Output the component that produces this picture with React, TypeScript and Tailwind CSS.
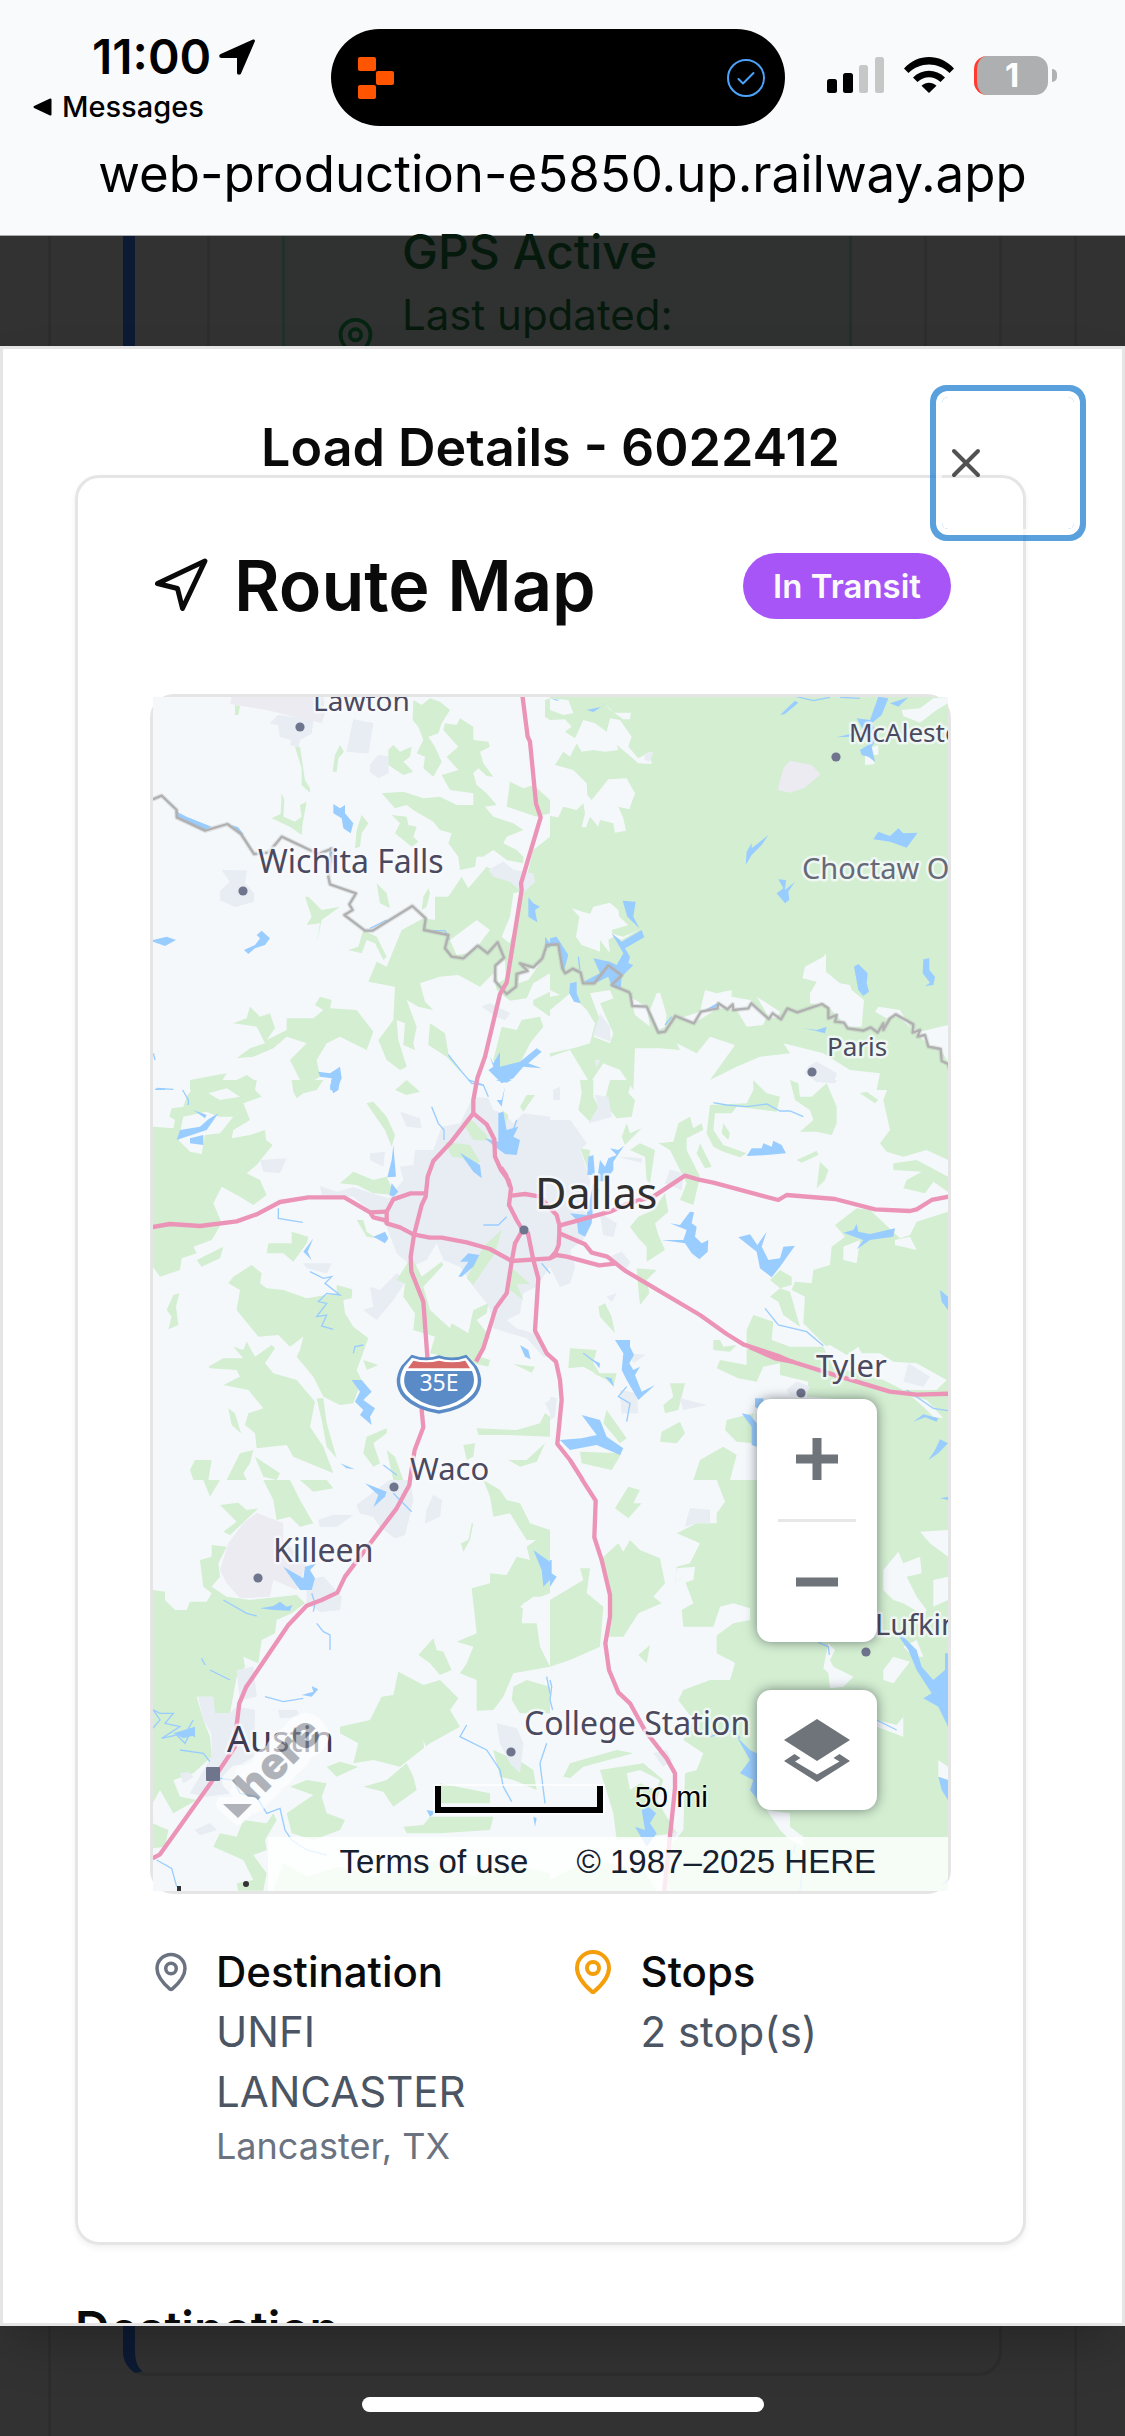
import React from "react";
import { MapPin, Navigation, X } from "lucide-react";

type Tile = {
  at: [number, number];
  green: string[];
  light?: string[];
  urban: string[];
  grey?: string[];
  water: string[];
  streams: string[];
};

const tiles: Tile[] = [
  {
    at: [140, 690],
    green: [
      "820,30 845,45 870,25 900,35 930,60 905,100 895,130 865,140 885,170 905,215 880,260 850,235 855,200 830,190 850,150 835,110 818,90",
      "915,100 950,105 960,85 1000,110 1000,150 1045,155 1050,170 1020,185 1030,220 1060,260 1040,258 1015,235 1000,250 1010,285 1040,310 1070,345 1035,350 1060,380 1090,390 1120,400 1150,420 1100,440 1090,460 1130,480 1150,500 1150,520 1100,510 1060,480 1030,500 1010,500 1005,530 960,540 955,500 925,460 935,430 900,420 880,395 820,360 800,345 765,355 725,310 790,305 850,325 900,320 950,345 1000,345 1000,310 930,300 905,255 955,240 920,200 955,170 910,120",
      "745,180 760,165 780,185 815,170 810,200 790,215 820,245 790,255 745,225",
      "465,170 480,170 495,270 510,295 510,308 485,285 485,235",
      "600,165 612,185 595,205 590,245 578,245 585,195",
      "425,310 433,330 430,380 465,395 485,380 480,345 500,335 488,400 485,435 450,410 395,385 422,372",
      "665,375 685,400 665,430 660,470 645,475 650,420",
      "755,375 800,380 805,405 830,410 820,440 835,455 815,470 765,430 780,400",
      "1110,275 1150,295 1180,285 1230,330 1230,370 1190,380 1100,350",
      "885,620 925,620 965,560 985,595 1040,530 1100,560 1150,600 1180,480 1230,440 1230,850 1180,880 1160,925 1110,932 1070,900 1060,850 1020,890 955,855 900,860 840,880 855,935 880,960 835,950 800,930 830,1010 820,1060 825,1080 790,1065 795,1000 770,990 775,1050 800,1130 780,1140 740,1110 715,1050 760,990 765,890 685,875 710,815 740,830 785,720 850,685 885,690",
      "280,1000 320,985 330,950 360,980 390,970 405,1015 380,1050 440,1020 440,985 520,985 550,960 525,945 540,920 575,930 570,955 650,960 700,1025 680,1080 600,1040 560,1060 530,1110 540,1160 490,1190 465,1140 450,1110 500,1060 440,1040 400,1075 340,1100 290,1105 330,1075 375,1060 350,1010",
      "150,1170 230,1155 260,1150 230,1200 150,1200",
      "290,1170 320,1155 350,1175 330,1200 300,1200",
      "870,1000 915,1030 925,1090 965,1150 920,1100 865,1065",
      "1085,1010 1130,1020 1145,990 1200,980 1210,1010 1170,1060 1140,1120 1080,1150 1060,1110",
      "505,620 545,660 600,650 545,690 530,760 540,700 500,705 515,680 495,620",
      "670,720 710,740 740,800 730,810 705,760 680,750 665,790 625,780 655,770",
      "710,580 740,610 750,655 720,640",
      "1180,930 1230,905 1230,980 1180,945",
      "865,595 870,610 860,650 845,660 850,620",
      "285,45 300,48 295,75 285,75",
      "1215,30 1230,25 1230,90 1215,80",
    ],
    light: [
      "930,750 1010,690 1050,720 1020,760 985,790 950,795",
      "1120,610 1140,605 1130,700 1108,760 1085,740 1110,680",
      "1065,830 1095,810 1098,865 1075,880",
      "1140,850 1200,820 1165,870 1135,880",
    ],
    urban: [
      "245,540 320,542 315,580 342,610 342,635 285,650 240,630 240,605 270,575",
      "390,100 415,75 520,90 515,130 480,150 475,172 450,165 455,150 420,140 415,105",
      "640,88 700,100 685,190 620,185",
      "690,225 715,195 745,200 745,250 715,265 690,245",
      "1045,540 1090,515 1120,540 1180,550 1185,575 1150,610 1110,575 1060,560",
      "1025,950 1050,940 1110,970 1095,990 1070,980",
    ],
    grey: ["275,20 550,20 555,70 545,100 440,75 380,60 270,42"],
    water: [
      "105,362 140,380 215,410 190,420 110,385",
      "580,342 600,355 615,345 615,370 640,400 632,430 610,415 605,385 580,370",
      "38,750 80,740 108,750 75,768 38,755",
      "350,735 365,722 390,745 375,765 345,775 325,792 312,780 345,765 360,745",
      "1165,622 1180,640 1200,650 1185,660 1192,697 1165,680",
      "535,1145 570,1150 600,1130 605,1165 590,1200 570,1200 575,1165 540,1160",
      "1050,1100 1060,1120 1080,1085 1080,1130 1140,1115 1190,1075 1205,1085 1165,1120 1205,1135 1150,1130 1120,1165 1085,1180 1045,1140 1060,1130",
      "275,405 295,412 312,435 300,430",
      "570,470 585,480 580,520 565,510",
      "1215,740 1230,760 1230,775 1215,770",
    ],
    streams: ["925,1095 965,1145 995,1180 1030,1185", "690,715 740,690", "880,722 915,722 928,750", "40,1090 45,1110", "50,1195 100,1198"],
  },
  {
    at: [550, 690],
    green: [
      "0,20 1194,20 1194,1200 980,1200 990,1150 900,1140 820,1090 700,1060 720,1090 630,1100 560,1130 480,1170 530,1100 555,1065 480,1040 440,1090 380,1060 390,1080 330,1075 255,1075 250,1200 210,1140 160,1120 120,1180 60,1080 0,1100",
    ],
    light: [
      "0,25 55,30 70,70 40,75 0,60",
      "165,40 190,68 243,68 240,88 220,88 180,60",
      "0,90 45,88 65,110 45,125 75,145 100,90 135,100 170,125 180,85 210,90 245,140 235,170 265,205 300,185 305,222 265,220 225,185 200,165 205,180 165,185 130,180 95,185 80,160 60,200 40,185 15,225 70,240 110,280 112,315 125,330 175,268 230,265 255,310 238,358 205,350 220,385 228,422 195,428 190,400 150,390 145,410 120,380 108,412 95,412 105,370 100,340 80,360 40,350 25,382 0,378",
      "65,655 120,672 130,650 180,638 205,660 208,680 235,705 185,720 190,740 175,750 180,790 150,750 150,785 95,765 78,740 88,680",
      "1055,60 1110,55 1150,25 1194,20 1194,40 1160,60 1110,98 1060,78",
      "820,800 828,790 828,845 870,880 900,885 905,900 942,930 935,1010 890,1010 835,950 780,940 780,910 800,875 757,865 765,830",
      "320,910 330,908 350,975 345,1010 325,1020 300,960",
      "450,965 465,900 500,910 545,900 545,920 600,930 650,980 640,1005 590,1010 560,960 505,955 430,1000 390,985",
      "620,920 690,965 680,985 655,980",
      "985,950 1050,960 1080,1010 1110,1025 1194,1005 1194,1115 1170,1075 1135,1065 1100,1030 1040,975 1010,985 975,965",
      "120,910 180,900 190,925 150,940 190,1030 180,1060 130,1040 150,990",
      "0,960 30,935 60,910 110,960 135,1000 120,1060 70,1075 0,1090",
      "180,730 220,740 265,720 215,750",
      "945,180 985,165 985,195 960,195 975,222 945,225",
      "240,920 290,950 300,1010 255,975",
      "0,900 30,915 0,920",
    ],
    urban: [
      "775,1130 800,1115 860,1150 850,1180 800,1175 765,1150",
      "150,970 180,1010 182,1055 130,1035",
      "285,190 310,185 300,215 283,210",
      "135,1110 150,1110 140,1135",
    ],
    grey: ["720,212 785,225 812,253 765,293 720,308 683,300 700,235"],
    water: [
      "110,60 155,50 185,30 130,66",
      "690,75 735,32 745,38 705,72",
      "985,20 1015,25 995,75 965,100 985,140 965,170 975,215 955,200 935,195 930,180 955,165 945,130 920,85 960,90",
      "860,142 910,130 950,125 900,140",
      "1020,40 1075,22 1045,50",
      "0,25 30,30 20,32",
      "587,525 590,485 605,460 605,475 655,435 635,465 605,495",
      "970,448 985,425 1020,438 1045,415 1060,430 1103,428 1070,473 1020,455",
      "685,568 708,570 705,600 735,575 715,605 718,630 705,640 680,610 700,595",
      "218,632 257,635 250,680 268,715 232,680",
      "185,730 215,755 275,720 283,742 225,775 240,800 235,820 250,825 215,860 212,900 185,890 175,860 135,880 100,875 150,850 130,805 180,815 200,825 220,790",
      "0,745 20,740 55,795 40,850 25,765 0,765",
      "60,880 80,875 80,910 92,940 72,935 58,910",
      "912,830 925,822 953,850 950,880 957,905 940,918 925,900",
      "1120,808 1138,805 1138,840 1155,860 1150,885 1125,888 1140,878 1118,850",
      "760,1015 800,1020 830,1010 825,1030 795,1022",
      "465,960 500,940 505,950",
    ],
    streams: ["85,800 90,840", "300,970 325,1025", "345,1005 365,980", "740,20 790,32 840,22", "870,22 930,25"],
  },
  {
    at: [140, 1080],
    green: [
      "38,140 100,145 105,120 88,110 95,85 130,80 140,50 175,0 350,0 345,30 365,50 310,70 330,120 280,150 275,175 330,165 375,150 378,180 398,195 350,255 320,280 360,300 380,345 340,375 300,350 245,320 220,370 245,430 215,480 160,500 170,520 125,535 120,570 60,590 38,560",
      "280,590 335,555 365,580 360,610 380,625 430,630 500,655 590,640 590,615 637,628 635,655 610,660 615,700 640,740 685,775 650,870 665,900 640,970 600,975 550,950 520,890 470,830 480,810 490,770 450,800 415,765 355,770 290,690 300,630 265,610",
      "205,860 250,835 310,835 280,800 310,810 320,785 345,830 395,795 405,805 375,850 400,880 470,900 525,965 510,1040 550,1100 580,1180 460,1130 440,1095 350,1105 345,1060 315,1035 325,1000 370,985 325,930 250,915 300,890 290,870 210,865",
      "455,455 505,470 500,490 460,545 430,520 380,520 385,490 455,490",
      "170,540 250,500 240,535 185,560",
      "100,645 118,640 108,680 115,735 85,748 95,710 80,690",
      "530,955 550,955 560,1030 590,1135 560,1100 545,1020",
      "265,985 285,1000 303,1060 275,1035",
      "600,310 640,275 700,300 740,290 765,345 700,340 650,315",
      "680,70 700,65 740,110 765,165 755,200 735,150 700,100",
      "455,0 550,0 530,30 490,40 470,55 460,35",
      "765,30 800,0 840,35 800,45",
      "680,1070 740,1045 740,1060 700,1090 720,1150 700,1160 670,1120",
      "1010,1045 1130,1050 1200,1030 1215,1000 1230,1010 1230,1070 1100,1065 1015,1065",
      "1105,1140 1160,1140 1215,1090 1190,1145 1140,1160",
      "970,1095 1005,1090 1000,1130 980,1140",
      "150,1170 165,1140 215,1140 205,1200 160,1200",
      "300,1120 340,1110 330,1150 310,1180 320,1200 260,1200",
      "345,1130 420,1180 410,1200 370,1190",
      "740,1110 765,1130 790,1200 760,1200",
      "650,420 670,420 680,455 710,475 680,470",
      "670,840 715,855 680,870",
      "1120,852 1185,860 1175,878",
    ],
    light: ["130,110 200,95 235,110 280,110 240,160 195,165 185,222 150,215 115,180", "205,40 260,25 300,50 240,60"],
    urban: [
      "1000,50 1045,55 1060,90 1090,100 1120,130 1150,100 1230,110 1230,560 1190,620 1150,640 1140,700 1100,720 1130,745 1180,760 1230,830 1210,830 1160,775 1060,745 1050,690 1040,670 1000,620 960,560 910,540 890,490 860,540 815,560 770,520 740,440 700,400 640,350 545,345 540,318 590,335 640,322 745,355 790,300 780,260 820,255 825,210 880,210 905,140 960,130",
      "670,690 700,680 690,620 720,630 770,580 800,600 760,660 710,720",
      "780,95 840,115 845,145 800,140",
      "690,220 735,215 730,260 690,240",
      "360,240 440,235 420,280 370,275",
      "490,550 575,550 560,580 500,565",
      "1215,970 1230,960 1230,1000",
    ],
    water: [
      "235,100 200,150 110,180 120,150 180,140 205,118",
      "160,90 200,105 195,115",
      "150,175 190,165 190,195 150,190",
      "760,195 768,290 742,292 755,240",
      "960,218 1020,255 1025,295 1000,275",
      "1075,100 1090,95 1100,150 1135,140 1120,170 1140,180 1130,225 1095,222 1065,200 1035,175 1075,185",
      "1095,20 1085,80 1070,60 1085,60",
      "575,0 600,0 595,30 580,40 570,20",
      "635,900 665,900 695,935 670,960 705,985 690,1010 695,1035 660,1005 670,990 645,965 660,935",
      "955,590 985,545 960,545 985,520 1018,525 1000,560 965,590",
      "700,470 735,455 745,475 735,490",
      "490,515 520,475 503,515 515,540",
      "1140,795 1165,810 1172,838 1155,830",
      "1065,0 1115,0 1100,8",
      "755,310 775,335 760,350 748,345",
      "600,1150 645,1168 620,1165",
    ],
    streams: [
      "510,575 550,595 575,590 555,610 600,645 560,640 535,665 560,670 530,710 560,705 545,738 580,748",
      "875,80 895,130 912,150 912,180",
      "415,385 415,415 488,427",
      "1030,435 1075,435 1100,410",
      "128,30 145,60 145,75",
      "640,820 645,800 670,795",
      "985,0 1030,15 1045,50",
      "1205,550 1230,580",
      "730,1155 770,1185",
      "1130,120 1120,150",
      "45,28 75,28",
    ],
  },
  {
    at: [550, 1080],
    green: [
      "90,0 130,0 130,50 145,80 135,120 120,125 85,90 95,40",
      "180,0 245,0 235,40 255,60 245,110 200,115 180,90 165,60",
      "610,0 650,40 690,50 680,95 560,80 545,100 495,100 490,150 520,195 590,220 570,232 520,215 490,200 470,160 480,75 590,70 610,30",
      "520,130 540,160 535,180 515,160",
      "720,0 745,10 750,50 785,50 830,10 860,80 860,130 845,165 800,155 750,155 790,120 780,90 735,60",
      "930,40 950,35 985,60 975,70",
      "990,0 1194,0 1194,240 1130,210 1060,230 1010,215 990,190 1020,150 1000,60 1015,20",
      "1030,250 1100,240 1194,290 1194,335 1150,305 1125,340 1060,325 1070,300 1115,275 1030,270",
      "325,190 370,185 385,130 420,110 430,145 455,130 460,150 410,175 410,210 450,290 430,375 390,360 410,310 380,250 360,210",
      "450,190 485,260 465,265 440,220",
      "810,245 835,270 825,300 800,325",
      "740,240 800,212 805,225 755,248",
      "90,205 120,210 115,270",
      "275,145 225,195 215,170 230,130 240,160",
      "270,190 315,210 300,310 290,300 285,230 240,210",
      "240,440 265,410 310,390 345,340 355,395 315,430 325,465 345,510 290,545 290,500 265,475",
      "260,565 320,570 290,600 298,640 270,675 265,625",
      "660,600 690,570 725,590 725,615 690,625",
      "660,650 690,625 720,635 750,740 700,705 685,665",
      "790,570 840,555 845,500 885,470 855,435 920,385 960,390 1050,475 1080,465 1100,425 1194,395 1194,1200 900,1200 900,960 770,950 775,905 690,885 690,850 640,860 620,905 565,895 500,865 510,840 590,855 590,750 610,705 670,725 665,780 720,800 830,800 760,730 765,650 725,630 735,605 785,610",
      "145,680 165,670 185,710 195,760 150,710",
      "60,805 140,810 130,850 155,890 100,860 55,865",
      "360,910 405,910 385,990 345,1000 340,975 370,950",
      "335,1055 390,1025 405,1060 380,1090 330,1085",
      "430,1200 450,1140 520,1100 560,1125 540,1200",
      "530,1020 610,1000 610,1090 560,1085 525,1050",
      "90,1115 215,1120 185,1170 95,1150",
      "170,990 230,1075 210,1090 160,1030",
      "490,780 510,780 520,800 560,795 540,815 490,810",
      "130,880 200,880 190,920 170,900",
    ],
    light: [
      "820,800 840,795 890,825 925,800 935,820 990,820 1030,845 1100,850 1190,900 1160,930 1060,930 1000,900 850,860",
      "1035,480 1080,470 1100,510 1035,495",
      "880,500 930,480 920,550 880,540",
      "1000,420 1060,440 1040,460",
      "1085,950 1130,960 1180,1015 1150,1010 1120,980",
    ],
    urban: [
      "0,120 60,120 110,190 90,210 120,300 100,480 60,510 75,560 60,610 30,620 0,560",
      "10,30 30,20 30,60 10,60",
      "135,45 175,50 185,110 115,130 145,80",
      "150,400 200,430 190,470 160,465",
      "180,530 215,515 240,545 225,575",
      "360,270 400,280 395,330 345,310",
      "710,930 740,905 780,920 765,950 720,945",
      "1075,850 1140,890 1120,920 1060,905",
      "210,930 260,940 265,1000 215,1000",
      "390,955 470,975 400,990",
      "170,650 200,640 185,665",
      "800,0 860,0 855,10",
      "205,230 275,235 275,248",
      "240,820 285,825 250,850",
      "0,950 20,955 15,1010 0,1020",
    ],
    water: [
      "590,228 605,205 635,205 640,190 665,200 670,182 695,195 708,220 650,225",
      "195,780 240,780 240,800 252,825 238,850 250,870 270,860 255,885 275,935 315,915 265,960 230,900 215,870 220,820",
      "115,230 130,225 135,285 112,285",
      "150,240 165,260 175,235 200,225 180,205 205,210 222,197 190,245 190,270 165,305 190,300 140,305",
      "130,310 150,330 130,370 125,430 105,470 85,460 80,420 60,400 110,405",
      "360,430 390,435 420,395 432,397 425,430 440,440 435,470 455,490 475,480 473,515 448,538 425,520 405,490 335,480 400,480 410,450",
      "565,472 600,463 622,495 650,455 635,500 655,540 690,535 700,500 735,497 690,560 665,592 630,565 620,515",
      "880,458 910,450 920,432 925,455 960,462 1035,445 1030,470 960,480 920,508 940,480",
      "1170,630 1194,650 1194,690 1175,665",
      "30,1080 95,1075 140,1065 95,1005 150,1020 170,1070 220,1105 210,1125 140,1095 60,1110",
      "1090,1025 1120,1003 1165,1015 1160,1025 1125,1012",
      "1135,1140 1155,1110 1170,1078 1194,1090 1165,1120",
      "575,1000 600,1005 620,1030 620,1100 605,1095 605,1040",
      "615,955 640,955 640,1000 615,980",
      "165,890 185,895 192,920",
      "130,840 150,850 148,865",
    ],
    streams: [
      "490,68 530,75 590,80 650,72 690,93 720,93 760,110",
      "645,685 685,735 770,755 820,797",
      "1070,930 1150,985 1194,992",
      "230,920 205,950 240,970 230,1025",
      "100,820 140,850",
    ],
  },
  {
    at: [140, 1480],
    green: [
      "370,0 450,0 480,60 520,130 480,140 450,110 410,120 400,60",
      "480,0 560,0 580,25 520,35",
      "240,75 295,68 320,90 355,85 270,165 250,155 290,125",
      "180,240 215,230 215,195 260,200 235,250 240,290 215,320 260,350 330,360 470,345 495,370 455,400 410,420 405,460 365,480 355,550 310,530 315,560 290,590 270,700 225,700 215,650 170,650 190,720 210,770 215,830 160,880 100,900 120,950 170,960 100,1000 60,930 38,970 38,330 75,335 75,360 105,390 140,390 150,365 200,365 215,340 190,320",
      "775,575 850,615 900,600 955,655 930,690 960,740 870,790 780,860 700,840 640,850 655,790 600,760 600,740 690,720 725,650 760,645",
      "995,325 1050,310 1050,280 1100,285 1130,230 1170,240 1160,200 1230,150 1230,340 1150,370 1145,430 1190,430 1200,500 1230,560 1120,580 1090,650 1060,690 1010,692 1010,600 960,580 980,550 1000,500 950,485 1010,460",
      "1030,0 1080,30 1100,60 1140,70 1170,130 1230,150 1230,180 1160,180 1110,100 1060,110 1050,50",
      "835,525 880,475 890,510 910,515 935,570 900,585 870,550",
      "995,130 1000,130 990,180 970,215 963,190 985,180",
      "1120,620 1160,600 1230,620 1230,700 1140,700 1115,660",
      "1060,810 1150,850 1180,870 1190,930 1120,900 1080,890",
      "440,1000 520,945 450,920 500,900 560,910 545,950 560,1000 615,1020 600,1050 520,1080 455,1060",
      "560,860 600,845 655,860 590,890",
      "240,1060 290,1070 310,1020 380,1030 400,1000 410,1020 375,1080 380,1110 340,1125 380,1180 370,1232 295,1232 290,1210 340,1200 310,1140 220,1100",
      "670,920 740,900 800,850 820,890 830,930 760,980 730,935",
      "900,910 1050,940 1050,970 900,970",
      "870,1010 1060,1010 1050,1050 900,1060 800,1060 790,1040 850,1035",
      "400,1232 430,1150 500,1190 600,1160 700,1190 900,1140 1000,1190 1100,1150 1230,1180 1230,1232",
      "38,1030 85,1050 75,1100 38,1105",
      "190,0 240,0 210,50",
    ],
    light: ["1140,380 1180,350 1230,350 1230,400 1190,410", "850,780 870,830 855,830"],
    urban: [
      "650,75 750,0 810,0 820,60 795,165 765,175 720,140 700,110 660,100",
      "535,120 580,105 640,105 590,140 540,140",
      "860,90 880,45 905,60 900,110 855,130",
      "500,300 550,290 605,350 600,390 540,395 500,370",
      "175,650 220,650 225,700 270,700 290,680 345,690 340,830 290,860 270,940 200,950 150,940 215,830 215,760 190,720",
      "120,880 145,875 160,890 130,910",
      "165,1050 210,1030 230,1050 180,1065",
      "1070,730 1130,745 1150,790 1140,880 1110,850 1080,790",
      "290,570 340,560 350,650 300,660",
      "415,690 470,690 480,710 420,715",
    ],
    grey: ["350,98 430,130 430,180 500,250 470,330 400,300 390,350 300,355 260,310 240,270 265,190 310,130"],
    water: [
      "675,10 740,35 735,50 700,82 715,45",
      "430,260 490,295 495,260 530,250 510,270 525,295 515,330 480,330",
      "360,385 400,378 420,365 440,380 457,375 450,392 400,390",
      "485,645 520,635 515,618 535,628 515,650",
      "1180,210 1230,245 1230,300 1210,320 1205,270",
      "100,760 165,740 165,765 130,775",
      "1180,1010 1190,1015 1185,1040",
      "860,990 890,995 870,1010",
    ],
    streams: [
      "38,745 60,720 40,690 60,700 100,700 75,730 120,740 65,775 110,765 135,790 150,760 165,770 145,745 160,720",
      "120,810 190,820 210,845",
      "240,895 280,900 300,940 350,950 380,1000 420,985 435,1050 455,1080 500,1110 560,1125",
      "980,735 960,770 1040,810 1080,870 1090,920 1115,965",
      "375,650 430,665 490,655",
      "250,360 320,400 350,408",
      "210,570 270,600",
      "530,430 550,455 570,465 570,510",
      "1220,790 1200,850 1215,970",
      "50,1140 95,1165 110,1220",
      "760,40 815,95",
      "515,340 525,370 520,395",
      "1220,590 1230,640",
      "185,535 195,555",
    ],
  },
  {
    at: [550, 1480],
    green: [
      "500,0 1194,0 1194,1232 350,1232 360,1100 400,1050 405,880 440,870 460,820 400,780 430,720 385,660 400,630 480,600 540,600 555,550 500,520 500,440 400,440 395,390 430,370 400,290 375,310 380,260 420,250 450,190 380,160 440,130 500,130 500,100 525,65",
      "150,240 205,190 220,215 240,180 270,210 330,235 345,310 310,350 335,370 265,400 220,470 175,470 180,340",
      "0,360 100,300 90,265 120,265 110,340 160,380 150,500 60,540 0,560",
      "195,85 235,20 270,30 250,70 275,70 235,115",
      "265,525 300,495 290,550",
      "40,890 60,850 200,810 250,820 100,860 60,895",
      "150,870 280,850 340,900 320,960 380,1060 200,1080 190,1000",
      "0,1200 120,1140 280,1170 320,1232 0,1232",
    ],
    light: [
      "510,380 550,370 600,385 600,420 550,430 495,470 495,520 550,545 520,600 480,590 380,620 380,600 470,560 450,500 490,440",
      "375,310 380,265 435,260 430,300 400,310 400,290",
      "1000,270 1045,215 1060,250 1110,230 1115,280 1070,290 1100,350 1130,390 1120,405 1060,370 1030,360 1000,330",
      "1110,155 1194,150 1194,230 1140,190",
      "1150,300 1194,290 1194,360 1150,380",
      "1000,570 1030,530 1080,545 1030,610 1000,600",
      "835,490 855,510 840,540 850,560 910,590 880,620 840,625 835,580 820,565",
      "650,990 720,1000 720,1040 760,1070 760,1100 720,1080 690,1050",
      "980,720 1040,735 1060,710 1060,770 980,740",
      "1060,500 1100,480 1120,530 1090,530",
      "1165,840 1194,860 1194,900 1165,890",
      "230,880 270,870 330,900 320,930 270,910 240,930",
      "290,830 380,790 370,830 330,840",
      "480,0 495,10 500,50 480,60",
    ],
    urban: ["420,85 480,90 480,130 440,130 405,140", "310,820 350,810 365,840 340,860", "360,1060 385,1055 370,1080"],
    water: [
      "560,770 600,810 640,830 640,980 600,930 610,900 570,880 600,840",
      "1000,440 1060,470 1100,510 1115,560 1150,600 1185,570 1185,520 1194,520 1194,740 1165,680 1120,655 1145,640 1100,570 1075,510 1040,460",
      "1165,890 1194,900 1194,960 1175,930",
      "295,980 318,1000 300,1030 320,1060 290,1100 255,1040 285,1050 275,990",
      "0,240 5,240 5,280 20,290 0,320",
      "1170,55 1194,50 1194,60",
      "1175,1215 1194,1195 1194,1205",
    ],
    streams: ["980,720 1040,750", "480,770 550,750 570,775 530,715", "805,487 835,500 838,525", "0,600 5,620 0,660 8,690", "760,1150 750,1232", "735,1095 730,1120"],
  },
];

const borders: { at: [number, number]; points: string }[] = [
  {
    at: [140, 690],
    points:
      "38,328 65,317 110,360 110,382 195,422 262,402 303,432 342,492 385,488 425,440 535,492 578,475 565,560 570,583 648,610 628,643 638,660 613,675 675,722 697,722 817,648 857,685 852,720 925,735 915,775 935,800 970,805 1013,767 1043,790 1073,757 1092,803 1066,827 1065,873 1100,912 1128,890 1130,852 1163,843 1140,820 1180,832 1207,805 1220,765 1255,763 1267,835 1276,850 1298,836 1322,848 1329,880 1363,880 1405,826 1445,856 1415,885 1470,908",
  },
  {
    at: [550, 690],
    points:
      "240,908 247,948 290,950 325,1028 345,1025 376,978 432,1000 453,965 503,955 505,940 532,958 548,943 550,960 595,955 604,940 656,987 668,970 693,988 712,955 742,967 816,942 835,955 835,985 860,975 855,995 882,998 893,1015 940,1022 962,1012 983,1028 1000,1000 1000,1020 1020,985 1037,973 1090,1003 1088,1028 1110,1020 1103,1040 1125,1035 1135,1070 1172,1077 1175,1113 1194,1122 1200,1140",
  },
];

const roads: { at: [number, number]; points: string }[] = [
  {
    at: [140, 690],
    points: "1147,15 1163,140 1170,155 1188,340 1202,382 1143,580 1145,600 1100,878 1080,912 1035,1100 1012,1165 1000,1230 1000,1270",
  },
  {
    at: [140, 1080],
    points:
      "1000,100 930,190 880,243 863,290 857,350 845,375 822,465 812,530 814,575 850,665 862,830 845,990 850,1042 824,1110 810,1200 808,1215 770,1285 615,1490 592,1538 545,1560 500,1577 445,1635 318,1822 298,1870 290,1935 285,2000 215,2105 60,2323 38,2335",
  },
  {
    at: [140, 1080],
    points:
      "1000,100 1040,133 1063,178 1065,230 1083,270 1105,300 1113,325 1107,375 1130,420 1148,450 1125,490 1115,545 1100,640 1067,685 1030,805 1008,845",
  },
  { at: [140, 1080], points: "1083,262 1098,285 1110,320" },
  {
    at: [140, 1080],
    points:
      "38,441 90,432 180,438 290,424 350,403 420,366 505,352 613,352 690,397 700,412 740,422 740,430 780,442 820,463 870,473 905,473 980,487 1050,507 1115,543 1230,535 1250,525 1280,530 1378,556 1430,550",
  },
  { at: [140, 1080], points: "690,397 740,395" },
  { at: [140, 1080], points: "740,430 740,395 760,358 812,340 857,340" },
  { at: [140, 1080], points: "1115,347 1155,342 1200,350 1230,385 1250,405 1258,435 1258,460 1256,495 1248,515 1230,535" },
  { at: [140, 1080], points: "1163,455 1180,540 1195,595 1185,752 1220,820 1248,845 1260,900 1265,960 1252,1092 1290,1140 1328,1200" },
  {
    at: [550, 1480],
    points: "96,-2 137,62 133,172 155,240 180,345 180,410 166,490 177,570 205,637 240,670 285,752 350,835 375,880 375,925 342,1240",
  },
  {
    at: [550, 1080],
    points: "28,437 180,395 240,368 310,350 405,287 450,300 490,308 685,360 710,345 855,357 975,388 1080,393 1100,388 1145,360 1200,349",
  },
  {
    at: [550, 1080],
    points: "28,460 105,493 125,518 172,530 225,572 310,622 450,705 530,762 580,793 690,830 720,843 860,887 1020,935 1100,944 1200,941",
  },
  { at: [550, 1080], points: "600,802 675,835 730,846" },
];

const labels: { name: string; x: number; y: number; size: number; color: string }[] = [
  { name: "Lawton", x: 313, y: 711, size: 28, color: "#4a4960" },
  { name: "McAlester", x: 849, y: 742, size: 26, color: "#4a4960" },
  { name: "Wichita Falls", x: 258, y: 873, size: 32, color: "#4a4960" },
  { name: "Choctaw Otsa", x: 802, y: 879, size: 29, color: "#666a78" },
  { name: "Paris", x: 827, y: 1056, size: 26, color: "#4a4960" },
  { name: "Dallas", x: 535, y: 1209, size: 43, color: "#2f2f2f" },
  { name: "Tyler", x: 816, y: 1377, size: 31, color: "#4a4960" },
  { name: "Waco", x: 410, y: 1480, size: 31, color: "#4a4960" },
  { name: "Killeen", x: 273, y: 1562, size: 32, color: "#4a4960" },
  { name: "Lufkin", x: 875, y: 1635, size: 29, color: "#4a4960" },
  { name: "College Station", x: 524, y: 1735, size: 32, color: "#4a4960" },
  { name: "Austin", x: 227, y: 1752, size: 36, color: "#3d3c52" },
];

const dots: [number, number][] = [
  [300, 727],
  [243, 891],
  [836, 757],
  [812, 1072],
  [524, 1230],
  [801, 1393],
  [394, 1487],
  [258, 1578],
  [511, 1752],
  [866, 1652],
];

function Polys({ list, fill }: { list: string[]; fill: string }) {
  return (
    <g fill={fill}>
      {list.map((points, i) => (
        <polygon key={i} points={points} />
      ))}
    </g>
  );
}

function MapDrawing() {
  const place = ([x, y]: [number, number]) => `translate(${x} ${y}) scale(0.33333)`;
  return (
    <svg
      className="absolute inset-0 size-full"
      viewBox="153 697 795 1194"
      preserveAspectRatio="xMidYMid slice"
      role="img"
      aria-label="Map of the route around Dallas"
    >
      <rect x="0" y="600" width="1200" height="1400" fill="#f4f8fb" />
      {tiles.map((t, i) => (
        <g key={i} transform={place(t.at)}>
          <Polys list={t.urban} fill="#e8edf4" />
        </g>
      ))}
      {tiles.map((t, i) => (
        <g key={i} transform={place(t.at)}>
          <Polys list={t.green} fill="#d3eed1" />
          <Polys list={t.light ?? []} fill="#f4f8fb" />
          {i !== 2 && <Polys list={t.urban} fill="#e8edf4" />}
          <Polys list={t.grey ?? []} fill="#ebebf1" />
          {i === 2 && (
            <Polys
              list={[
                "985,110 1040,165 1045,182 1000,180 975,140",
                "915,185 990,195 1020,245 990,262 970,235 935,230",
                "815,530 845,590 905,545 910,555 850,620 870,690 930,745 935,730 985,760 1000,690 1045,670 1040,700 1010,720 1050,770 1020,830 1050,840 1045,860 870,820 885,770 820,750 825,700 790,650 795,610 770,600",
                "1085,450 1065,520 1030,570 1000,615 980,595 1030,500",
                "1112,560 1170,612 1130,612 1150,660 1110,630",
                "1160,45 1185,45 1150,95 1140,80",
                "1085,90 1105,105 1100,130",
              ]}
              fill="#d3eed1"
            />
          )}
          <Polys list={t.water} fill="#9acdff" />
          <g fill="none" stroke="#9acdff" strokeWidth="4">
            {t.streams.map((points, n) => (
              <polyline key={n} points={points} />
            ))}
          </g>
        </g>
      ))}
      {borders.map((b, i) => (
        <g key={i} transform={place(b.at)} fill="none" strokeLinejoin="round">
          <polyline points={b.points} stroke="#b4b4b4" strokeOpacity="0.3" strokeWidth="14" />
          <polyline points={b.points} stroke="#b0b0b0" strokeWidth="7" />
        </g>
      ))}
      {roads.map((r, i) => (
        <g key={i} transform={place(r.at)} fill="none" stroke="#ec94b7" strokeWidth="13" strokeLinejoin="round">
          <polyline points={r.points} />
        </g>
      ))}
      {dots.map(([x, y], i) => (
        <circle key={i} cx={x} cy={y} r="4.6" fill="#70758e" />
      ))}
      <rect x="206" y="1767" width="14" height="14" rx="1" fill="#70758e" />
      <circle cx="246" cy="1884" r="3" fill="#333" />
      <rect x="177" y="1886" width="4" height="6" fill="#333" />
      <g
        fontFamily='"Noto Sans", sans-serif'
        stroke="#f8fafc"
        strokeOpacity="0.75"
        strokeWidth="5"
        strokeLinejoin="round"
        paintOrder="stroke"
      >
        {labels.map((l) => (
          <text key={l.name} x={l.x} y={l.y} fontSize={l.size} fill={l.color}>
            {l.name}
          </text>
        ))}
      </g>
      <g transform="translate(140 1080) scale(0.33333)">
        <path
          d="M815 824 Q856 840 897 826 Q938 840 979 824 L1010 858 Q1040 910 1005 952 Q970 990 897 1001 Q824 990 789 952 Q754 910 784 858 Z"
          fill="#5a8bc6"
        />
        <path
          d="M816 833 Q856 848 897 835 Q938 848 978 833 L1001 860 Q1028 908 996 945 Q964 980 897 991 Q830 980 798 945 Q766 908 793 860 Z"
          fill="#fff"
        />
        <path d="M820 842 Q860 852 897 842 Q934 852 976 842 L990 865 L804 865 Z" fill="#d66a69" />
        <path d="M799 873 L996 873 Q1012 912 985 940 Q955 972 897 982 Q839 972 809 940 Q782 912 799 873 Z" fill="#5a8bc6" />
      </g>
      <text x="439" y="1391" fontSize="23" fill="#fff" textAnchor="middle" fontFamily='"Noto Sans", sans-serif'>
        35E
      </text>
      <g opacity="0.62">
        <g transform="translate(253 1805) rotate(-45)">
          <text
            fontSize="44"
            fontWeight="900"
            fontFamily="Inter, sans-serif"
            fill="#858a92"
            stroke="#fff"
            strokeWidth="20"
            strokeLinejoin="round"
            paintOrder="stroke"
          >
            here
          </text>
        </g>
        <path
          d="M223 1804h29l-14 14z"
          fill="#858a92"
          stroke="#fff"
          strokeWidth="14"
          strokeLinejoin="round"
          paintOrder="stroke"
        />
      </g>
    </svg>
  );
}

function StatusBar() {
  return (
    <div className="flex w-full items-start">
      <div className="flex flex-1 flex-col gap-2 pl-8 pt-1">
        <div className="flex items-center gap-2 pl-[60px] text-[48px] font-semibold leading-12">
          11:00
          <svg className="size-9" viewBox="0 0 36 36" aria-hidden="true">
            <path
              d="M34 .5c1.300-.5 2.300.6 1.800 1.900L22 34.500c-.8 1.800-4 1.600-4-.8V19H2.500C0 19-.6 16 1.700 15z"
              fill="#000"
            />
          </svg>
        </div>
        <a href="#messages" className="flex items-center gap-2.5 text-[29px] font-medium leading-9">
          <svg className="h-5 w-5" viewBox="0 0 20 20" aria-hidden="true">
            <path d="M18.500 2.500v15L2.500 10z" fill="#000" stroke="#000" strokeWidth="2" strokeLinejoin="round" />
          </svg>
          Messages
        </a>
      </div>
      <div className="flex h-[97px] w-[454px] items-center justify-between rounded-full bg-black pl-[27px] pr-5">
        <svg className="h-[42px] w-9" viewBox="0 0 36 42" fill="#ff5500" aria-hidden="true">
          <rect x="0" y="0" width="18" height="14" rx="2" />
          <rect x="18" y="14" width="18" height="14" rx="2" />
          <rect x="0" y="28" width="18" height="14" rx="2" />
        </svg>
        <svg className="size-[38px]" viewBox="0 0 38 38" fill="none" stroke="#4ba3fb" strokeWidth="2" aria-hidden="true">
          <circle cx="19" cy="19" r="18" />
          <path d="M11.500 20l4.500 4.500L26.500 14" strokeLinecap="round" strokeLinejoin="round" />
        </svg>
      </div>
      <div className="flex h-[92px] flex-1 items-center pl-[42px]">
        <svg className="h-9 w-[58px]" viewBox="0 0 58 36" aria-label="Signal">
          <rect x="0" y="22" width="10" height="14" rx="2.500" fill="#000" />
          <rect x="16" y="16" width="10" height="20" rx="2.500" fill="#000" />
          <rect x="32" y="8" width="9" height="28" rx="2.500" fill="#c6c8c8" />
          <rect x="48" y="0" width="9" height="36" rx="2.500" fill="#c6c8c8" />
        </svg>
        <svg className="ml-[19px] h-9 w-[50px]" viewBox="0 0 50 36" aria-label="Wi-Fi">
          <path d="M0 11.500C14-3.800 36-3.800 50 11.500l-4.500 4.500C34 4.500 16 4.500 4.500 16z" />
          <path d="M9 20.500c9-9 23-9 32 0L36.500 25c-6.500-6.300-16.500-6.300-23 0z" />
          <path d="M17.500 28.700c4.300-4 10.700-4 15 0L25 36z" />
        </svg>
        <div className="ml-5 flex items-center gap-1">
          <div className="flex h-[39px] w-[74px] items-center justify-center overflow-hidden rounded-[13px] border-l-3 border-[#ff3b30] bg-[#aeafb1] text-[33px] font-bold leading-none text-white">
            1
          </div>
          <div className="h-[13px] w-[5px] rounded-r-full bg-[#b0b1b3]" />
        </div>
      </div>
    </div>
  );
}

function PageBehind() {
  return (
    <div className="col-start-1 row-start-1 flex bg-[#323232] px-12" aria-hidden="true">
      <div className="flex-1 border-x-3 border-[#2d2d2d] px-[72px] pb-[60px]">
        <div className="h-full rounded-b-3xl border-b-3 border-l-[12px] border-r-3 border-[#2d2d2d] border-l-[#0c1a33] px-[72px] pb-[72px]">
          <div className="h-1/2 border-x-3 border-[#2d2d2d] px-[72px]">
            <div className="h-full border-x-3 border-[#22302a] bg-[#303231] pl-12 text-[42px] leading-[63px] text-[#06190d]">
              <div className="flex items-start gap-6">
                <MapPin className="mt-20 size-[45px] text-[#052412]" />
                <div className="-mt-4">
                  <div className="text-[48px] font-medium">GPS Active</div>
                  <div>Last updated:</div>
                </div>
              </div>
            </div>
          </div>
        </div>
      </div>
    </div>
  );
}

function MapControls() {
  return (
    <div className="absolute bottom-[81px] right-[71px] flex w-[120px] flex-col gap-12">
      <div className="flex flex-col items-center rounded-[14px] bg-white shadow-[0_0_12px_rgba(15,22,33,0.5)]">
        <button type="button" aria-label="Zoom in" className="flex h-[120px] w-full items-center justify-center">
          <svg className="size-[42px]" viewBox="0 0 42 42" stroke="#6f747a" strokeWidth="9">
            <path d="M21 0v42M0 21h42" />
          </svg>
        </button>
        <div className="h-[3px] w-[78px] bg-[#e7e7e7]" />
        <button type="button" aria-label="Zoom out" className="flex h-[120px] w-full items-center justify-center">
          <svg className="size-[42px]" viewBox="0 0 42 42" stroke="#6f747a" strokeWidth="9">
            <path d="M0 21h42" />
          </svg>
        </button>
      </div>
      <button
        type="button"
        aria-label="Map layers"
        className="flex h-[120px] items-center justify-center rounded-[14px] bg-white shadow-[0_0_12px_rgba(15,22,33,0.5)]"
      >
        <svg className="h-[63px] w-[66px]" viewBox="0 0 66 63" fill="#6f747a">
          <path d="M33 0l33 21-33 21L0 21z" />
          <path d="M10.500 35L0 42l33 21 33-21-10.500-7-6 4 6 3.500L33 55.500 11 42.500l5.500-3.500z" />
        </svg>
      </button>
    </div>
  );
}

function RouteMap() {
  return (
    <div className="rounded-3xl border-3 border-[#e5e5e5]">
      <div className="relative h-[1194px] overflow-hidden font-['Liberation_Sans',sans-serif]">
        <MapDrawing />
        <MapControls />
        <div className="absolute bottom-[78px] right-60 flex items-end gap-8">
          <div className="h-[27px] w-[168px] border-6 border-t-0 border-black shadow-[0_0_0_2px_rgba(255,255,255,0.7)]" />
          <span className="text-[30px] leading-[33px] text-black [text-shadow:0_0_3px_#fff,0_0_3px_#fff]">50 mi</span>
        </div>
        <div className="absolute bottom-0 right-0 flex h-[54px] items-center gap-12 bg-white/80 px-[72px] pb-1 text-[33px] leading-[50px] text-[#16202e]">
          <a href="#terms">Terms of use</a>
          <span>© 1987–2025 HERE</span>
        </div>
      </div>
    </div>
  );
}

function LoadDialog() {
  return (
    <div
      role="dialog"
      aria-labelledby="load-title"
      className="relative z-10 col-start-1 row-start-1 my-[110px] overflow-hidden border-3 border-[#e5e5e5] bg-white pl-[72px] pr-24 pt-[72px] text-[#0a0a0a] shadow-2xl"
    >
      <h2 id="load-title" className="text-center text-[52px] font-semibold leading-[54px]">
        Load Details - 6022412
      </h2>
      <section className="rounded-3xl border-3 border-[#e5e5e5] p-[72px] shadow-[0_3px_6px_rgba(0,0,0,0.06)]">
        <div className="mb-[72px] flex items-center justify-between">
          <h3 className="flex items-center gap-6 text-[70px] font-semibold leading-[72px]">
            <Navigation className="size-[60px]" />
            Route Map
          </h3>
          <span className="rounded-full bg-[#a855f7] px-[30px] py-[9px] text-[33px] font-semibold leading-12 text-[#fafafa]">
            In Transit
          </span>
        </div>
        <RouteMap />
        <div className="mt-12 grid grid-cols-2 gap-9 text-[42px] leading-[60px]">
          <div className="flex items-start gap-6">
            <MapPin className="mt-1.5 h-12 w-[42px] shrink-0 text-[#6b7280]" />
            <div>
              <p className="font-medium">Destination</p>
              <p className="text-[#4b5563]">UNFI LANCASTER</p>
              <p className="text-[36px] leading-12 text-[#6b7280]">Lancaster, TX</p>
            </div>
          </div>
          <div className="flex items-start gap-6">
            <MapPin className="mt-1.5 size-12 shrink-0 text-[#f59e0b]" />
            <div>
              <p className="font-medium">Stops</p>
              <p className="text-[#4b5563]">2 stop(s)</p>
            </div>
          </div>
        </div>
      </section>
      <h3 className="mt-12 text-[48px] font-semibold leading-[72px]">Destination</h3>
      <button
        type="button"
        aria-label="Close"
        className="absolute right-12 top-12 flex size-[132px] items-center rounded-md opacity-70 shadow-[0_0_0_6px_#ffffff,0_0_0_12px_#1379d0]"
      >
        <X className="size-12" />
      </button>
    </div>
  );
}

export default function App() {
  return (
    <div className="relative flex h-screen flex-col overflow-hidden bg-[#323232] font-['Inter',sans-serif]">
      <header className="flex flex-col items-center border-b border-[#a9abab] bg-[#f9fafc] pb-[25px] pt-[29px] text-black">
        <StatusBar />
        <div className="mt-3 text-[51px] leading-[72px]">web-production-e5850.up.railway.app</div>
      </header>
      <main className="grid min-h-0 flex-1 grid-rows-[minmax(0,1fr)]">
        <PageBehind />
        <LoadDialog />
      </main>
      <div className="absolute bottom-6 left-1/2 z-20 h-[15px] w-[402px] -translate-x-1/2 rounded-full bg-white" />
    </div>
  );
}
